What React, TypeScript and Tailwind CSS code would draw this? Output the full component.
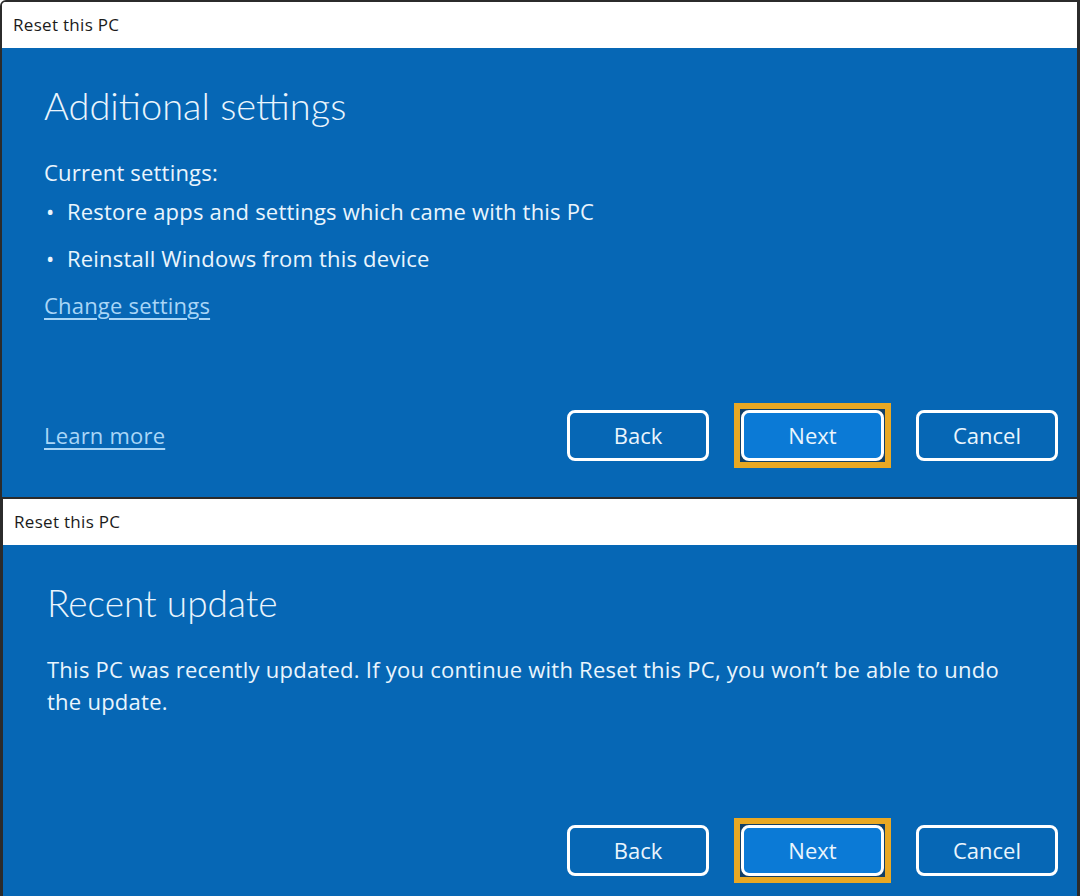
import React from "react";

const body = { fontFamily: "'Open Sans', 'Noto Sans', sans-serif" };
const head = { fontFamily: "Lato, 'Open Sans', sans-serif" };

function Buttons() {
  return (
    <div className="flex items-center gap-[25px]">
      <button className="w-[142px] h-[51px] rounded-[8px] border-[3px] border-white text-[22px] text-[#eaf5fd] bg-transparent">
        Back
      </button>
      <div className="border-[6px] border-[#e9a823] bg-[#123f66] p-px">
        <button className="w-[143px] h-[51px] rounded-[8px] border-[3px] border-white text-[22px] text-[#eaf5fd] bg-[#0b7ad6]">
          Next
        </button>
      </div>
      <button className="w-[142px] h-[51px] rounded-[8px] border-[3px] border-white text-[22px] text-[#eaf5fd] bg-transparent">
        Cancel
      </button>
    </div>
  );
}

function TitleBar() {
  return (
    <div className="h-[46px] bg-white flex items-center px-[11px] text-[17px] tracking-[0.3px] text-[#1b1b1b]">
      Reset this PC
    </div>
  );
}

export default function App() {
  return (
    <div className="w-[1080px] h-[896px] bg-white flex flex-col overflow-hidden" style={body}>
      {/* Dialog 1 */}
      <div className="h-[499px] flex flex-col border-l-2 border-r-[3px] border-t-2 border-b-2 border-[#2b2b2b] rounded-tl-[6px] overflow-hidden">
        <TitleBar />
        <div className="flex-1 bg-[#0667b5] flex flex-col pl-[42px] pr-[19px] text-[#eaf5fd]">
          <h1 className="mt-[33px] text-[38px] leading-[48px] font-light" style={head}>
            Additional settings
          </h1>
          <div className="mt-[28px] text-[22px] leading-[30px] tracking-[0.2px]">Current settings:</div>
          <ul className="mt-[9px] flex flex-col gap-[17px] text-[22px] leading-[30px] tracking-[0.2px]">
            <li className="flex items-center">
              <span className="w-[23px] pl-[2px]">•</span>Restore apps and settings which came with this PC
            </li>
            <li className="flex items-center">
              <span className="w-[23px] pl-[2px]">•</span>Reinstall Windows from this device
            </li>
          </ul>
          <div className="mt-[17px] text-[22px] leading-[30px] tracking-[0.2px]">
            <span className="underline underline-offset-4 text-[#a9d6f7]">Change settings</span>
          </div>
          <div className="mt-auto mb-[29px] flex items-center justify-between">
            <span className="text-[22px] tracking-[0.2px] underline underline-offset-4 text-[#a9d6f7]">Learn more</span>
            <Buttons />
          </div>
        </div>
      </div>
      {/* Dialog 2 */}
      <div className="flex-1 flex flex-col border-l-[3px] border-r-[3px] border-[#2b2b2b]">
        <TitleBar />
        <div className="flex-1 bg-[#0667b5] flex flex-col pl-[44px] pr-[19px] text-[#eaf5fd]">
          <h1 className="mt-[34px] text-[37px] leading-[48px] font-light" style={head}>
            Recent update
          </h1>
          <p className="mt-[26px] text-[22px] leading-[32px] tracking-[0.25px]">
            This PC was recently updated. If you continue with Reset this PC, you won’t be able to undo
            <br />
            the update.
          </p>
          <div className="mt-auto mb-[13px] flex justify-end">
            <Buttons />
          </div>
        </div>
      </div>
    </div>
  );
}
